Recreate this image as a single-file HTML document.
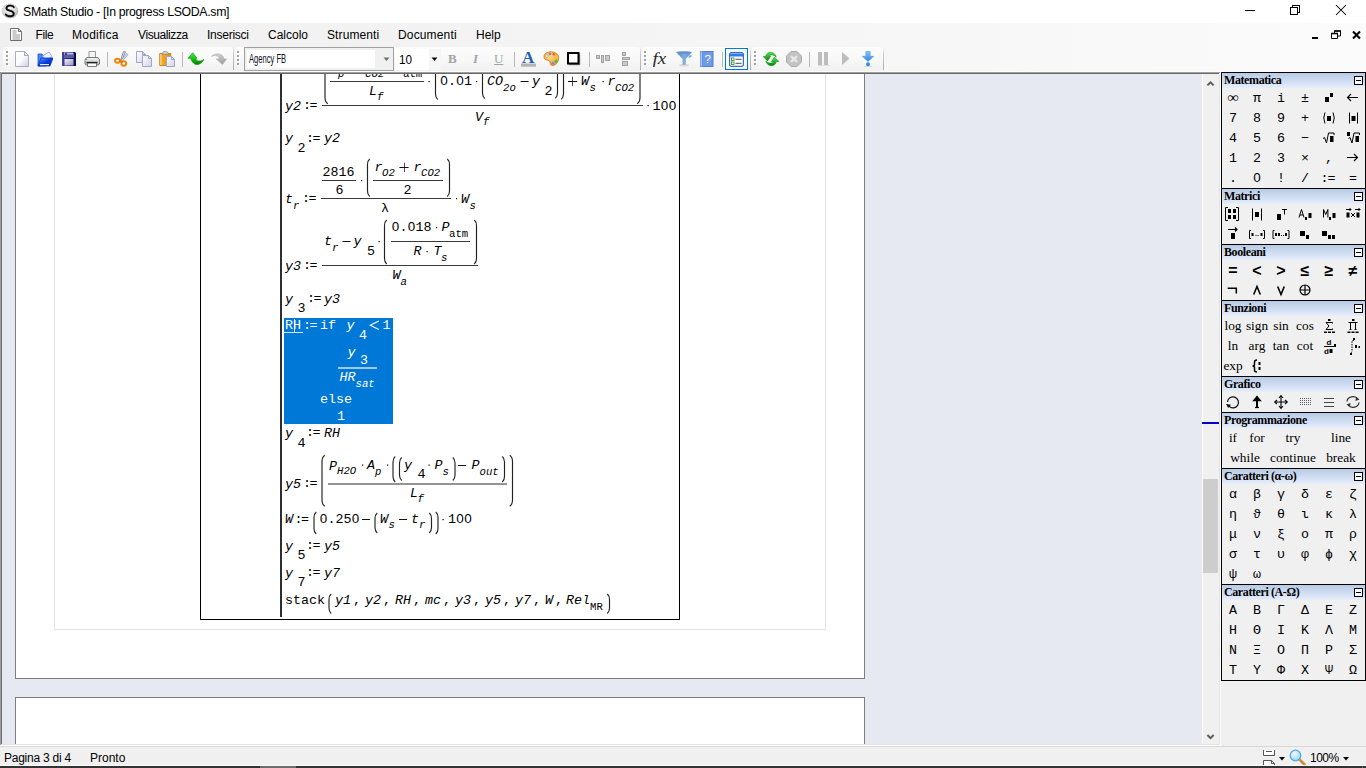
<!DOCTYPE html>
<html><head><meta charset="utf-8"><title>SMath Studio - [In progress LSODA.sm]</title>
<style>
*{box-sizing:border-box;margin:0;padding:0}
html,body{width:1366px;height:768px;overflow:hidden;background:#fff}
body{position:relative;font-family:"Liberation Sans",sans-serif;font-size:12px;color:#000}
.abs,.abs *{position:absolute}
div,span,svg{position:absolute}
.t{white-space:pre;line-height:normal}
#title{left:0;top:0;width:1366px;height:23px;background:#fff}
#bars{left:0;top:23px;width:1366px;height:49px;background:linear-gradient(90deg,#f0f0f0 0%,#f3f3f3 35%,#fbfbfb 100%)}
.mi{top:27px;font-size:12px;white-space:pre;height:16px;line-height:16px}
.ts{top:47px;height:24px;border-radius:3px 3px 2px 2px;background:linear-gradient(#fcfcfc,#f8f8f8 50%,#f1f1f1)}
.grip i{left:0;width:2px;height:2px;background:#a0a0a0;display:block;position:absolute;box-shadow:1px 1px 0 rgba(255,255,255,0.9)}
.sep{top:52px;width:1px;height:15px;background:#b9b9b9}
#doc{left:0;top:72px;width:1221px;height:674px;background:#e6e9f1}
.m{font-family:"Liberation Mono",monospace;font-size:13.333px;white-space:pre;line-height:16px;height:16px;color:#000}
.m.i{font-style:italic}
.m.s{font-size:10.667px;line-height:12px;height:12px}
.w{color:#fff}
.ph{left:1222px;width:143px;height:15px}
.phd{left:1222px;width:143px;height:15px;background:linear-gradient(#b7cbe4,#cfdcf0 50%,#e6eefc)}
.pt{font-family:"Liberation Serif",serif;font-weight:bold;font-size:12px;line-height:15px;height:15px;white-space:pre;left:1224px;letter-spacing:-0.4px}
.pc{font-family:"Liberation Mono",monospace;font-size:13.333px;line-height:22px;height:22px;width:24px;text-align:center;white-space:pre}
.ps{font-family:"Liberation Serif",serif;font-size:13.333px;line-height:20px;height:20px;text-align:center;white-space:pre}
#status{left:0;top:746px;width:1366px;height:20px;background:#f0f0f0}
</style></head>
<body>
<div id="title"><svg style="left:1px;top:2px" width="18" height="18" viewBox="0 0 18 18"><defs><radialGradient id="sg" cx="40%" cy="35%" r="70%"><stop offset="0" stop-color="#f4f4f4"/><stop offset="0.7" stop-color="#d4d4d4"/><stop offset="1" stop-color="#a8a8a8"/></radialGradient></defs><ellipse cx="9" cy="9" rx="7.8" ry="7" fill="url(#sg)" stroke="#9a9a9a" stroke-width="0.7" stroke-dasharray="1.5 1"/><path d="M12.8 5.2 C11.8 3.2 5.6 2.8 5.4 6.2 C5.2 9.4 13.0 8.0 12.8 11.8 C12.6 15.2 6.0 14.8 4.8 12.4" fill="none" stroke="#0c0c0c" stroke-width="1.9" stroke-linecap="round"/></svg><span class="t" style="left:23px;top:5px;font-size:12.3px;line-height:15px;letter-spacing:-0.32px">SMath Studio - [In progress LSODA.sm]</span><svg style="left:1240px;top:0" width="126" height="23" viewBox="0 0 126 23"><path d="M5 10.5h10" stroke="#000" stroke-width="1" fill="none" shape-rendering="crispEdges"/><path d="M50.5 7.5h7v7h-7z M52.5 7.5v-2h7v7h-2" stroke="#000" stroke-width="1" fill="none" shape-rendering="crispEdges"/><path d="M96 5l10 10M106 5L96 15" stroke="#000" stroke-width="1.05" fill="none"/></svg></div>
<div id="bars"></div><div style="left:0;top:71px;width:1221px;height:1px;background:#fdfdfd"></div>
<svg style="left:9px;top:27px" width="15" height="15" viewBox="0 0 15 15"><path d="M1.5 1.5h8l3 3v9h-11z" fill="#fff" stroke="#6e6e6e" stroke-width="1"/><path d="M9.5 1.5v3h3" fill="none" stroke="#6e6e6e" stroke-width="1"/><path d="M3.5 4h4M3.5 6h4M3.5 8h7.5M3.5 10h7.5M3.5 12h7.5" stroke="#8a8a8a" stroke-width="0.9"/></svg><span class="mi" style="left:35.5px;letter-spacing:-0.35px">File</span><span class="mi" style="left:72px;letter-spacing:0.25px">Modifica</span><span class="mi" style="left:138px;letter-spacing:-0.4px">Visualizza</span><span class="mi" style="left:207px;letter-spacing:-0.25px">Inserisci</span><span class="mi" style="left:268px;letter-spacing:0px">Calcolo</span><span class="mi" style="left:327px;letter-spacing:0.1px">Strumenti</span><span class="mi" style="left:398px;letter-spacing:0.15px">Documenti</span><span class="mi" style="left:476px;letter-spacing:0px">Help</span><svg style="left:1308px;top:27px" width="56" height="15" viewBox="0 0 56 15"><path d="M4 11h6" stroke="#000" stroke-width="2" shape-rendering="crispEdges"/><path d="M23.5 6.5h6v5h-6z M26.5 6v-2h6v5h-2.5" fill="none" stroke="#000" stroke-width="1"/><path d="M23 6.5h7M26 4h7" stroke="#000" stroke-width="1.6"/><path d="M45 4.5l7 7M52 4.5l-7 7" stroke="#000" stroke-width="2.1"/></svg>
<div class="ts" style="left:3px;width:230px"></div><div class="ts" style="left:235px;width:405px"></div><div class="ts" style="left:642px;width:108px"></div><div class="ts" style="left:752px;width:131px"></div><div style="left:233px;top:47px;width:1px;height:23px;background:linear-gradient(rgba(176,176,176,0),rgba(176,176,176,0.6) 30%,#adadad)"></div><div style="left:640px;top:47px;width:1px;height:23px;background:linear-gradient(rgba(176,176,176,0),rgba(176,176,176,0.6) 30%,#adadad)"></div><div style="left:750px;top:47px;width:1px;height:23px;background:linear-gradient(rgba(176,176,176,0),rgba(176,176,176,0.6) 30%,#adadad)"></div><div style="left:883px;top:47px;width:1px;height:23px;background:linear-gradient(rgba(176,176,176,0),rgba(176,176,176,0.6) 30%,#adadad)"></div><div class="grip" style="left:6px;top:51px;width:2px;height:16px"><i style="top:0px"></i><i style="top:4px"></i><i style="top:8px"></i><i style="top:12px"></i></div><svg style="left:14px;top:51px" width="16" height="16" viewBox="0 0 16 16"><defs><linearGradient id="gn" x1="0" y1="0" x2="1" y2="1"><stop offset="0" stop-color="#ffffff"/><stop offset="0.5" stop-color="#fbfbfe"/><stop offset="1" stop-color="#c9cde2"/></linearGradient></defs><path d="M1.5 0.5h9l4 4v11h-13z" fill="url(#gn)" stroke="#a9adc2"/><path d="M10.5 0.5v4h4z" fill="#e9ebf5" stroke="#a3a7bd" stroke-linejoin="round"/></svg><svg style="left:37px;top:51px" width="16" height="16" viewBox="0 0 16 16"><defs><linearGradient id="go" x1="0" y1="0" x2="1" y2="1"><stop offset="0" stop-color="#5aa2ff"/><stop offset="0.5" stop-color="#0a3fe0"/><stop offset="1" stop-color="#0026a8"/></linearGradient></defs><path d="M1 3h4l1 1.5h3V15H1z" fill="#3f8cf0" stroke="#1f4fd0" stroke-width="0.8"/><path d="M5.5 5l6.5-4 3 4.5-6 4z" fill="#eef0fb" stroke="#8c92d8" stroke-width="0.8"/><path d="M1 15l3-8h12l-3 8z" fill="url(#go)" stroke="#0a2fc0" stroke-width="0.8"/><path d="M3 13.6h9" stroke="#e8eaf6" stroke-width="1.2"/></svg><svg style="left:60px;top:51px" width="16" height="16" viewBox="0 0 16 16"><defs><linearGradient id="gs" x1="0" y1="0" x2="1" y2="0"><stop offset="0" stop-color="#4a4a9a"/><stop offset="0.3" stop-color="#26267c"/><stop offset="1" stop-color="#08084a"/></linearGradient><linearGradient id="gs2" x1="0" y1="0" x2="1" y2="1"><stop offset="0" stop-color="#f0f0fa"/><stop offset="1" stop-color="#9494c4"/></linearGradient></defs><path d="M2 1h13l1 1v13H2z" fill="url(#gs)"/><path d="M4 1.500h9.500v5H4z" fill="#b9b9e0"/><path d="M4 3.500h9.500v3H4z" fill="#5a5aa6"/><path d="M4.500 8h9v6.500h-9z" fill="url(#gs2)"/><circle cx="6" cy="3" r="1.100" fill="#24247c"/></svg><svg style="left:84px;top:51px" width="16" height="16" viewBox="0 0 16 16"><defs><linearGradient id="gp" x1="0" y1="0" x2="0" y2="1"><stop offset="0" stop-color="#f6f6f6"/><stop offset="1" stop-color="#b8b8b8"/></linearGradient></defs><path d="M5 0.5h6.5v6H5z" fill="#f4f4f4" stroke="#8c8c8c" stroke-width="0.9"/><path d="M2.5 6.5h11.500l1.500 2.500v4l-1.500 1h-11.500l-1.500-1v-4z" fill="url(#gp)" stroke="#6e6e6e" stroke-width="0.9"/><path d="M3.5 12h9v3.500h-9z" fill="#fafafa" stroke="#707070" stroke-width="0.9"/><path d="M2.500 11.500h11" stroke="#222" stroke-width="1.300"/><circle cx="2.700" cy="8.300" r="0.600" fill="#2ea02e"/></svg><div class="sep" style="left:107px"></div><svg style="left:114px;top:51px" width="16" height="16" viewBox="0 0 16 16"><path d="M9.500 0.500l2 0.300-4 9.500-1-0.800z" fill="#d4d7ea" stroke="#7c80a8" stroke-width="0.800"/><path d="M12.500 2.500l1.500 1-6 7-1-1z" fill="#dcdfee" stroke="#8a8fb8" stroke-width="0.700"/><ellipse cx="3.500" cy="9.800" rx="2.500" ry="2" fill="none" stroke="#e8890c" stroke-width="2"/><ellipse cx="9.800" cy="12.500" rx="2.300" ry="2.300" fill="none" stroke="#e8890c" stroke-width="2"/><path d="M5.500 9.500l3 1.800" stroke="#d87a06" stroke-width="2"/></svg><svg style="left:136px;top:51px" width="16" height="16" viewBox="0 0 16 16"><defs><linearGradient id="gc" x1="0" y1="0" x2="1" y2="1"><stop offset="0" stop-color="#ffffff"/><stop offset="1" stop-color="#cfd2e8"/></linearGradient></defs><path d="M0.500 0.500h6l3 3v8h-9z" fill="url(#gc)" stroke="#a2a6c4"/><path d="M6.500 0.500v3h3z" fill="#d5d8ea" stroke="#a2a6c4" stroke-linejoin="round"/><path d="M6.500 4.500h6l3 3v8h-9z" fill="url(#gc)" stroke="#a2a6c4"/><path d="M12.500 4.500v3h3z" fill="#d5d8ea" stroke="#a2a6c4" stroke-linejoin="round"/></svg><svg style="left:159px;top:51px" width="16" height="16" viewBox="0 0 16 16"><defs><linearGradient id="gpa" x1="0" y1="0" x2="1" y2="0"><stop offset="0" stop-color="#fff2d6"/><stop offset="0.25" stop-color="#f4a820"/><stop offset="1" stop-color="#e08a08"/></linearGradient><linearGradient id="gc2" x1="0" y1="0" x2="1" y2="1"><stop offset="0" stop-color="#ffffff"/><stop offset="1" stop-color="#cfd2e8"/></linearGradient></defs><path d="M0.700 2.500h11v12h-11z" fill="url(#gpa)" stroke="#c47a10" stroke-width="0.900"/><path d="M3 3.200c0-3.600 6.500-3.600 6.500 0z" fill="#dcdcdc" stroke="#8a8a8a" stroke-width="0.900"/><path d="M7.500 5.500h5l3 3v7h-8z" fill="url(#gc2)" stroke="#a2a6c4"/><path d="M12.500 5.500v3h3z" fill="#d5d8ea" stroke="#a2a6c4" stroke-linejoin="round"/></svg><div class="sep" style="left:182px"></div><svg style="left:188px;top:51px" width="16" height="16" viewBox="0 0 16 16"><defs><linearGradient id="gu" x1="0" y1="0" x2="0" y2="1"><stop offset="0" stop-color="#48f048"/><stop offset="0.5" stop-color="#14c414"/><stop offset="1" stop-color="#007800"/></linearGradient></defs><path d="M4.700 1.800L0.100 7.300H3C3.300 11 7 14.800 11 13.200C13.500 12.200 15 10.500 16 8.200C13 10.800 8.300 10.800 7.700 7.200H9z" fill="url(#gu)" stroke="#0a8a0a" stroke-width="0.600" stroke-linejoin="round"/></svg><svg style="left:211px;top:52px" width="16" height="16" viewBox="0 0 16 16"><defs><linearGradient id="gr" x1="0" y1="0" x2="0" y2="1"><stop offset="0" stop-color="#d0d0d0"/><stop offset="1" stop-color="#9c9c9c"/></linearGradient></defs><path d="M11.500 12.500l4.200-5.500h-2.700c-0.500-5-7.500-7.500-12.700-2.500 4.500-2 8-0.500 7.700 2.500h-2.800z" fill="url(#gr)" stroke="#a8a8a8" stroke-width="0.500" stroke-linejoin="round"/></svg><div class="grip" style="left:237px;top:51px;width:2px;height:16px"><i style="top:0px"></i><i style="top:4px"></i><i style="top:8px"></i><i style="top:12px"></i></div><div style="left:244px;top:47px;width:150px;height:24px;border:1px solid #a0a0a0;background:#f0f0f0"><div style="left:2px;top:2px;width:128px;height:18px;background:#fff"></div></div><span class="t" style="left:249px;top:51px;font-size:13px;line-height:15px;transform-origin:0 50%;transform:scaleX(0.585);color:#101020">Agency FB</span><svg style="left:383px;top:57px" width="8" height="5" viewBox="0 0 8 5"><path d="M0.500 0.500h6L3.500 4z" fill="#707070"/></svg><div style="left:395px;top:49px;width:34px;height:21px;background:#fff"></div><div style="left:429px;top:49px;width:12px;height:21px;background:#f6f6f6"></div><span class="t" style="left:399px;top:52px;font-size:13.3px;line-height:15px;transform-origin:0 50%;transform:scaleX(0.88)">10</span><svg style="left:431px;top:57px" width="8" height="5" viewBox="0 0 8 5"><path d="M0.600 0.500h5.800L3.500 3.900z" fill="#000"/></svg><span class="t" style="left:448px;top:51px;font-family:'Liberation Serif',serif;font-weight:bold;font-size:13px;line-height:15px;color:#a4a4a4">B</span><span class="t" style="left:473px;top:51px;font-family:'Liberation Serif',serif;font-weight:bold;font-style:italic;font-size:13px;line-height:15px;color:#a4a4a4">I</span><span class="t" style="left:494px;top:51px;font-family:'Liberation Serif',serif;font-size:13px;line-height:15px;color:#a4a4a4;text-decoration:underline">U</span><div class="sep" style="left:514px"></div><svg style="left:521px;top:51px" width="16" height="16" viewBox="0 0 16 16"><text x="7.200" y="12" font-family="Liberation Serif" font-weight="bold" font-size="17" text-anchor="middle" fill="#1f5fb4">A</text><rect x="0" y="12.500" width="15" height="3.200" fill="#b4b4b4"/></svg><svg style="left:543px;top:51px" width="16" height="16" viewBox="0 0 16 16"><defs><radialGradient id="gpl" cx="40%" cy="35%" r="70%"><stop offset="0" stop-color="#ffd98a"/><stop offset="1" stop-color="#ee9a28"/></radialGradient></defs><path d="M1 6C1 1.500 6 0.300 10 1c4 0.700 6.500 3.500 5.500 7.500-1 4-4 6.800-7 5.800-2.500-0.800-0.500-3-2-4.300C4.500 8.500 1 9.500 1 6z" fill="url(#gpl)" stroke="#c9761a" stroke-width="0.800"/><circle cx="3.800" cy="5" r="1.300" fill="#fff" stroke="#b0804a" stroke-width="0.500"/><circle cx="7" cy="3" r="1.200" fill="#3aa0f0"/><circle cx="10.800" cy="3.300" r="1.200" fill="#f05a28"/><circle cx="13.600" cy="6.500" r="1.200" fill="#f5d020"/><circle cx="13" cy="10.200" r="1.500" fill="#30c840"/><circle cx="9.800" cy="12.200" r="1.300" fill="#a070e8"/></svg><svg style="left:566px;top:51px" width="16" height="16" viewBox="0 0 16 16"><rect x="2.700" y="2.700" width="11.500" height="11.500" fill="#8c8c8c"/><rect x="2" y="2" width="10.500" height="10.500" fill="#fff" stroke="#000" stroke-width="2"/></svg><div class="sep" style="left:589px"></div><svg style="left:596px;top:51px" width="16" height="16" viewBox="0 0 16 16"><g fill="#c9c9c9" stroke="#a2a2a2" stroke-width="1"><rect x="0.500" y="4.500" width="3" height="3"/><rect x="5.500" y="4.500" width="2" height="7"/><rect x="9.500" y="4.500" width="4" height="5"/></g></svg><svg style="left:619px;top:51px" width="16" height="16" viewBox="0 0 16 16"><g fill="#c9c9c9" stroke="#a2a2a2" stroke-width="1"><rect x="3.500" y="1.500" width="3" height="3"/><rect x="3.500" y="6.500" width="7" height="2"/><rect x="3.500" y="10.500" width="5" height="4"/></g></svg><div class="grip" style="left:644px;top:51px;width:2px;height:16px"><i style="top:0px"></i><i style="top:4px"></i><i style="top:8px"></i><i style="top:12px"></i></div><svg style="left:653px;top:51px" width="16" height="16" viewBox="0 0 16 16"><text x="-0.500" y="12.500" font-family="Liberation Serif" font-style="italic" font-size="17" fill="#2a2a2a" transform="scale(1.12 1)" style="font-family:'Liberation Serif',serif">fx</text></svg><svg style="left:676px;top:51px" width="16" height="16" viewBox="0 0 16 16"><defs><linearGradient id="gf" x1="0" y1="0" x2="1" y2="0"><stop offset="0" stop-color="#4a82c8"/><stop offset="0.5" stop-color="#86aede"/><stop offset="1" stop-color="#5a8ccc"/></linearGradient></defs><ellipse cx="8" cy="14.200" rx="5" ry="1.200" fill="#d8d8d8"/><path d="M0.300 1.200h15.400L9.800 8v5.500l-3.200 0.500V8z" fill="url(#gf)"/><ellipse cx="8" cy="1.600" rx="7.600" ry="1.400" fill="#5f92d2"/><path d="M13 4.500l2.500-0.500v2l-3 1z" fill="#7aa6da"/></svg><svg style="left:700px;top:51px" width="16" height="16" viewBox="0 0 16 16"><rect x="0.500" y="0.500" width="12.500" height="15" fill="#6f9ae6" stroke="#4f7fd8"/><rect x="0.500" y="0.500" width="2" height="15" fill="#a9c4f2"/><path d="M2.500 0.500v15" stroke="#4f7fd8" stroke-width="0.700"/><text x="7.800" y="12" font-family="Liberation Sans" font-size="11.500" fill="#fff" text-anchor="middle">?</text></svg><div class="sep" style="left:722px"></div><div style="left:725px;top:48px;width:23px;height:22px;border:1px solid #0078d7;background:#f3f9ff"></div><svg style="left:729px;top:52px" width="15" height="15" viewBox="0 0 15 15"><rect x="0.700" y="0.700" width="13.600" height="13.600" rx="1.200" fill="#fff" stroke="#1a46a4" stroke-width="1"/><path d="M1 1.200h13v3.300H1z" fill="#2f7cf0"/><path d="M1.500 1.500h12" stroke="#7db4ff" stroke-width="1"/><rect x="2.500" y="6" width="2.500" height="2.500" fill="#fff" stroke="#3a9a3a" stroke-width="0.900"/><rect x="2.500" y="10" width="2.500" height="2.500" fill="#fff" stroke="#3a9a3a" stroke-width="0.900"/><path d="M6.500 7.300h6M6.500 11.300h6" stroke="#3a3a3a" stroke-width="0.900"/></svg><div class="grip" style="left:754px;top:51px;width:2px;height:16px"><i style="top:0px"></i><i style="top:4px"></i><i style="top:8px"></i><i style="top:12px"></i></div><svg style="left:763px;top:51px" width="16" height="16" viewBox="0 0 16 16"><defs><linearGradient id="grf" x1="0" y1="0" x2="0" y2="1"><stop offset="0" stop-color="#52e652"/><stop offset="1" stop-color="#058205"/></linearGradient></defs><path d="M0.200 5.500l4.300 4.500 3.300-4.800-2.400 0.400c1.200-2 4.600-2.600 7.800 0.400C12.200 1 4.500-1.200 2.600 5.300z" fill="url(#grf)" stroke="#0a8a0a" stroke-width="0.500"/><path d="M15.800 10.500l-4.300-4.500-3.300 4.800 2.400-0.400c-1.200 2-4.600 2.600-7.800-0.400C3.800 15 11.500 17.200 13.400 10.700z" fill="url(#grf)" stroke="#0a8a0a" stroke-width="0.500"/></svg><svg style="left:786px;top:51px" width="16" height="16" viewBox="0 0 16 16"><path d="M5 0.500h6l4.500 4.500v6l-4.500 4.500h-6l-4.500-4.500v-6z" fill="#c2c2c2" stroke="#adadad"/><path d="M5 5l6 6M11 5l-6 6" stroke="#e9e9e9" stroke-width="2.400"/></svg><div class="sep" style="left:809px"></div><svg style="left:818px;top:52px" width="12" height="14" viewBox="0 0 12 14"><rect x="0" y="0" width="4" height="13" fill="#bdbdbd"/><rect x="6" y="0" width="4" height="13" fill="#bdbdbd"/><path d="M-2 13.500h14" stroke="#dcdcdc" stroke-width="1"/></svg><svg style="left:842px;top:52px" width="8" height="13" viewBox="0 0 8 13"><path d="M0 0l7.500 6.500L0 13z" fill="#bdbdbd"/></svg><svg style="left:862px;top:51px" width="12" height="16" viewBox="0 0 12 16"><defs><linearGradient id="gst" x1="0" y1="0" x2="0" y2="1"><stop offset="0" stop-color="#8cc4f8"/><stop offset="1" stop-color="#2a86e0"/></linearGradient></defs><ellipse cx="6" cy="15.400" rx="4" ry="0.800" fill="#dadada"/><path d="M3.800 0.300h4.400v5h3.600L6 10.500 0.200 5.300h3.600z" fill="url(#gst)" stroke="#4a98e6" stroke-width="0.500"/><circle cx="6" cy="13.200" r="2" fill="#2f8ee8"/></svg>
<div id="doc"><div style="left:0;top:0;width:1221px;height:1px;background:#a0a0a0"></div><div style="left:0;top:0;width:1px;height:674px;background:#a0a0a0"></div><div style="left:1px;top:1px;width:1219px;height:1px;background:#696969"></div><div style="left:1px;top:1px;width:1px;height:672px;background:#696969"></div><div style="left:1219px;top:1px;width:1px;height:672px;background:#e3e3e3"></div><div style="left:1220px;top:0;width:1px;height:674px;background:#fff"></div><div style="left:1px;top:672px;width:1219px;height:1px;background:#e3e3e3"></div><div style="left:0;top:673px;width:1221px;height:1px;background:#fff"></div><div style="left:15px;top:2px;width:850px;height:605px;background:#fff;border:1px solid #7f7f7f;border-top:none"></div><div style="left:54px;top:2px;width:772px;height:556px;border:1px solid #e3e3e3;border-top:none"></div><div style="left:15px;top:625px;width:850px;height:47px;background:#fff;border:1px solid #7f7f7f;border-bottom:none"></div><div style="left:1202px;top:2px;width:17px;height:670px;background:#f0f0f0;border-left:1px solid #fff"></div><div style="left:1203px;top:407px;width:15px;height:94px;background:#cdcdcd"></div><div style="left:1202px;top:350px;width:17px;height:2px;background:#0000d0"></div><svg style="left:1202px;top:2px" width="17" height="670" viewBox="0 0 17 670"><path d="M5.400 11.400l3.100-3.100L11.600 11.400" fill="none" stroke="#5c5c5c" stroke-width="2"/><path d="M5.400 661l3.100 3.100L11.600 661" fill="none" stroke="#5c5c5c" stroke-width="2"/></svg></div>
<div id="math" style="left:0;top:74px;width:700px;height:560px;overflow:hidden"><div style="left:0;top:-74px;width:700px;height:640px"><div style="left:200px;top:74px;width:480px;height:546px;border:1px solid #000;border-top:none"></div><div style="left:280px;top:74px;width:2px;height:543px;background:#2e2e2e"></div><div style="left:284px;top:318px;width:109px;height:106px;background:#0078d7"></div><svg style="left:0;top:74px" width="700" height="560" viewBox="0 74 700 560"><path d="M322 105.5H643" stroke="#3a3a3a" stroke-width="1"/><path d="M327.8 56Q325 57.8 325 62.22V97.58Q325 102 327.8 103.8" fill="none" stroke="#222" stroke-width="1.15"/><path d="M637.2 56Q640 57.8 640 62.22V97.58Q640 102 637.2 103.8" fill="none" stroke="#222" stroke-width="1.15"/><rect x="349.5" y="66.5" width="1.2" height="1.2" fill="#000"/><rect x="389.5" y="66.5" width="1.2" height="1.2" fill="#000"/><path d="M330 81.5H424" stroke="#3a3a3a" stroke-width="1"/><rect x="428.5" y="81" width="1.2" height="1.2" fill="#000"/><path d="M437.7 62Q435.5 63.8 435.5 67.5V94Q435.5 97.7 437.7 99.5" fill="none" stroke="#222" stroke-width="1.15"/><rect x="476" y="81" width="1.2" height="1.2" fill="#000"/><path d="M484.7 64Q482.5 65.8 482.5 69.5V93Q482.5 96.7 484.7 98.5" fill="none" stroke="#222" stroke-width="1.15"/><path d="M520.6 81.5H528.6" stroke="#111" stroke-width="1"/><path d="M555.3 64Q557.5 65.8 557.5 69.5V92.7Q557.5 96.4 555.3 98.2" fill="none" stroke="#222" stroke-width="1.15"/><path d="M561.3 62Q563.5 63.8 563.5 67.5V93.7Q563.5 97.4 561.3 99.2" fill="none" stroke="#222" stroke-width="1.15"/><path d="M568 81.5H577.2" stroke="#111" stroke-width="1"/><path d="M572.5 76.7V86.1" stroke="#111" stroke-width="1" opacity="0.75"/><rect x="602.5" y="81" width="1.2" height="1.2" fill="#000"/><rect x="647.5" y="105" width="1.2" height="1.2" fill="#000"/><path d="M321 198.5H451" stroke="#3a3a3a" stroke-width="1"/><path d="M322 180.5H356" stroke="#3a3a3a" stroke-width="1"/><rect x="361" y="180" width="1.2" height="1.2" fill="#000"/><path d="M369.7 159Q367.5 160.8 367.5 164.5V191Q367.5 194.7 369.7 196.5" fill="none" stroke="#222" stroke-width="1.15"/><path d="M399.4 167.5H408.6" stroke="#111" stroke-width="1"/><path d="M404.5 162.7V172.1" stroke="#111" stroke-width="1" opacity="0.75"/><path d="M373 180.5H443" stroke="#3a3a3a" stroke-width="1"/><path d="M447.3 159Q449.5 160.8 449.5 164.5V191Q449.5 194.7 447.3 196.5" fill="none" stroke="#222" stroke-width="1.15"/><rect x="456" y="198" width="1.2" height="1.2" fill="#000"/><path d="M322 265.5H478" stroke="#3a3a3a" stroke-width="1"/><path d="M342.5 241.5H350.5" stroke="#111" stroke-width="1"/><rect x="378.5" y="241" width="1.2" height="1.2" fill="#000"/><path d="M386.7 220Q384.5 221.8 384.5 225.5V258.5Q384.5 262.2 386.7 264" fill="none" stroke="#222" stroke-width="1.15"/><rect x="436" y="227" width="1.2" height="1.2" fill="#000"/><path d="M391 241.5H470" stroke="#3a3a3a" stroke-width="1"/><rect x="426.5" y="251" width="1.2" height="1.2" fill="#000"/><path d="M474.3 220Q476.5 221.8 476.5 225.5V258.5Q476.5 262.2 474.3 264" fill="none" stroke="#222" stroke-width="1.15"/><path d="M284 332.5H303" stroke="#cfe4f7" stroke-width="1"/><path d="M294.5 319V333" stroke="#cfe4f7" stroke-width="1"/><path d="M378.8 321L370.2 325.2L378.8 329.4" fill="none" stroke="#fff" stroke-width="1.1"/><path d="M338 368H377" stroke="#9fc9ef" stroke-width="2"/><path d="M324.8 455.3Q322 457.1 322 461.52V500.08Q322 504.5 324.8 506.3" fill="none" stroke="#222" stroke-width="1.15"/><path d="M509.7 455.3Q512.5 457.1 512.5 461.52V500.08Q512.5 504.5 509.7 506.3" fill="none" stroke="#222" stroke-width="1.15"/><rect x="362" y="464.5" width="1.2" height="1.2" fill="#000"/><rect x="387" y="464.5" width="1.2" height="1.2" fill="#000"/><path d="M395.2 456.5Q393 458.3 393 462V476.5Q393 480.2 395.2 482" fill="none" stroke="#222" stroke-width="1.15"/><path d="M401.7 457.5Q399.5 459.3 399.5 463V475Q399.5 478.7 401.7 480.5" fill="none" stroke="#222" stroke-width="1.15"/><rect x="428.5" y="464.5" width="1.2" height="1.2" fill="#000"/><path d="M452.8 457.5Q455 459.3 455 463V475Q455 478.7 452.8 480.5" fill="none" stroke="#222" stroke-width="1.15"/><path d="M458 465.5H466" stroke="#111" stroke-width="1"/><path d="M502.3 456.5Q504.5 458.3 504.5 462V476.5Q504.5 480.2 502.3 482" fill="none" stroke="#222" stroke-width="1.15"/><path d="M328 484H507" stroke="#2a2a2a" stroke-width="1"/><path d="M316.2 512Q314 513.8 314 517.5V528.5Q314 532.2 316.2 534" fill="none" stroke="#222" stroke-width="1.15"/><path d="M362 519.5H370" stroke="#111" stroke-width="1"/><path d="M377.2 513Q375 514.8 375 518.5V527.5Q375 531.2 377.2 533" fill="none" stroke="#222" stroke-width="1.15"/><path d="M399 519.5H407" stroke="#111" stroke-width="1"/><path d="M429.3 513Q431.5 514.8 431.5 518.5V527.5Q431.5 531.2 429.3 533" fill="none" stroke="#222" stroke-width="1.15"/><path d="M435.8 512Q438 513.8 438 517.5V528.5Q438 532.2 435.8 534" fill="none" stroke="#222" stroke-width="1.15"/><rect x="442.5" y="519" width="1.2" height="1.2" fill="#000"/><path d="M331.2 594Q329 595.8 329 599.5V608Q329 611.7 331.2 613.5" fill="none" stroke="#222" stroke-width="1.15"/><path d="M607.3 594Q609.5 595.8 609.5 599.5V608Q609.5 611.7 607.3 613.5" fill="none" stroke="#222" stroke-width="1.15"/></svg><span class="m i" style="left:285px;top:99px">y2</span><span class="m" style="left:303px;top:97.5px;letter-spacing:-1.5px">:=</span><span class="m i" style="left:330px;top:60px">A</span><span class="m i s" style="left:338px;top:68px">p</span><span class="m i" style="left:357px;top:60px">P</span><span class="m i s" style="left:365px;top:68px">CO2</span><span class="m i" style="left:395px;top:60px">P</span><span class="m s" style="left:403px;top:68px">atm</span><span class="m i" style="left:369px;top:84px">L</span><span class="m i s" style="left:377px;top:90.5px">f</span><span class="m" style="left:440px;top:74px">0.01</span><span class="m i" style="left:487px;top:74px">CO</span><span class="m i s" style="left:503px;top:81.5px">2o</span><span class="m i" style="left:532px;top:74px">y</span><span class="m" style="left:544.5px;top:83.5px">2</span><span class="m i" style="left:581px;top:74px">W</span><span class="m i s" style="left:589.5px;top:81.5px">s</span><span class="m i" style="left:607.5px;top:74px">r</span><span class="m i s" style="left:615px;top:81.5px">CO2</span><span class="m" style="left:652.5px;top:99px">100</span><span class="m i" style="left:475px;top:110px">V</span><span class="m i s" style="left:483px;top:116px">f</span><span class="m i" style="left:285px;top:131px">y</span><span class="m" style="left:297.5px;top:141px">2</span><span class="m" style="left:306px;top:130.5px;letter-spacing:-1.5px">:=</span><span class="m i" style="left:324px;top:131px">y2</span><span class="m i" style="left:285px;top:192px">t</span><span class="m i s" style="left:293px;top:200px">r</span><span class="m" style="left:302px;top:190.5px;letter-spacing:-1.5px">:=</span><span class="m" style="left:322.5px;top:165px">2816</span><span class="m" style="left:335.5px;top:183px">6</span><span class="m i" style="left:374.5px;top:159.5px">r</span><span class="m i s" style="left:382px;top:167px">O2</span><span class="m i" style="left:413.5px;top:159.5px">r</span><span class="m i s" style="left:421px;top:167px">CO2</span><span class="m" style="left:403.5px;top:183px">2</span><span class="m" style="left:381px;top:201px">λ</span><span class="m i" style="left:461px;top:192px">W</span><span class="m i s" style="left:469.5px;top:200px">s</span><span class="m i" style="left:285px;top:259px">y3</span><span class="m" style="left:303px;top:257.5px;letter-spacing:-1.5px">:=</span><span class="m i" style="left:324px;top:234px">t</span><span class="m i s" style="left:332px;top:241.5px">r</span><span class="m i" style="left:353.5px;top:234px">y</span><span class="m" style="left:367px;top:244px">5</span><span class="m" style="left:391.5px;top:220px">0.018</span><span class="m i" style="left:441.5px;top:220px">P</span><span class="m s" style="left:449px;top:227.5px">atm</span><span class="m i" style="left:413.5px;top:244px">R</span><span class="m i" style="left:433.5px;top:244px">T</span><span class="m i s" style="left:441px;top:251.5px">s</span><span class="m i" style="left:392.5px;top:267.5px">W</span><span class="m i s" style="left:400.5px;top:275.5px">a</span><span class="m i" style="left:285px;top:291.5px">y</span><span class="m" style="left:297.5px;top:301px">3</span><span class="m" style="left:307px;top:291px;letter-spacing:-1.5px">:=</span><span class="m i" style="left:324px;top:291.5px">y3</span><span class="m" style="left:285px;top:318px;color:#fff">RH</span><span class="m" style="left:303px;top:317.5px;letter-spacing:-1.5px;color:#fff">:=</span><span class="m" style="left:320px;top:318px;color:#fff">if</span><span class="m i" style="left:346.5px;top:318px;color:#fff">y</span><span class="m" style="left:359px;top:328px;color:#fff">4</span><span class="m" style="left:382.5px;top:318px;color:#fff">1</span><span class="m i" style="left:347.5px;top:345px;color:#fff">y</span><span class="m" style="left:360px;top:353px;color:#fff">3</span><span class="m i" style="left:339.5px;top:370px;color:#fff">HR</span><span class="m i s" style="left:355.5px;top:378px;color:#fff">sat</span><span class="m" style="left:320px;top:392px;color:#fff">else</span><span class="m" style="left:337px;top:409px;color:#fff">1</span><span class="m i" style="left:285px;top:425.5px">y</span><span class="m" style="left:297.5px;top:436px">4</span><span class="m" style="left:306px;top:425px;letter-spacing:-1.5px">:=</span><span class="m i" style="left:324px;top:426px">RH</span><span class="m i" style="left:285px;top:477px">y5</span><span class="m" style="left:303px;top:476px;letter-spacing:-1.5px">:=</span><span class="m i" style="left:329px;top:459px">P</span><span class="m i s" style="left:337px;top:465px">H2O</span><span class="m i" style="left:367px;top:458px">A</span><span class="m i s" style="left:375px;top:465.5px">p</span><span class="m i" style="left:404px;top:458px">y</span><span class="m" style="left:417.5px;top:467px">4</span><span class="m i" style="left:434.5px;top:458px">P</span><span class="m i s" style="left:442.5px;top:465.5px">s</span><span class="m i" style="left:471.5px;top:458px">P</span><span class="m i s" style="left:479.5px;top:465.5px">out</span><span class="m i" style="left:410px;top:485.5px">L</span><span class="m i s" style="left:417.5px;top:492.5px">f</span><span class="m i" style="left:285px;top:512px">W</span><span class="m" style="left:294.5px;top:512px;letter-spacing:-1.5px">:=</span><span class="m" style="left:319.5px;top:512px">0.250</span><span class="m i" style="left:380px;top:512px">W</span><span class="m i s" style="left:388.5px;top:519px">s</span><span class="m i" style="left:411px;top:512px">t</span><span class="m i s" style="left:419px;top:519px">r</span><span class="m" style="left:448px;top:512px">100</span><span class="m i" style="left:285px;top:538.5px">y</span><span class="m" style="left:297.5px;top:548px">5</span><span class="m" style="left:306px;top:538px;letter-spacing:-1.5px">:=</span><span class="m i" style="left:324px;top:539px">y5</span><span class="m i" style="left:285px;top:565.5px">y</span><span class="m" style="left:297.5px;top:575px">7</span><span class="m" style="left:306px;top:565px;letter-spacing:-1.5px">:=</span><span class="m i" style="left:324px;top:566px">y7</span><span class="m" style="left:285px;top:593px">stack</span><span class="m i" style="left:335px;top:593px">y1</span><span class="m" style="left:353px;top:593px">,</span><span class="m i" style="left:365px;top:593px">y2</span><span class="m" style="left:383px;top:593px">,</span><span class="m i" style="left:395px;top:593px">RH</span><span class="m" style="left:413px;top:593px">,</span><span class="m i" style="left:425px;top:593px">mc</span><span class="m" style="left:443px;top:593px">,</span><span class="m i" style="left:455px;top:593px">y3</span><span class="m" style="left:473px;top:593px">,</span><span class="m i" style="left:485px;top:593px">y5</span><span class="m" style="left:503px;top:593px">,</span><span class="m i" style="left:515px;top:593px">y7</span><span class="m" style="left:533px;top:593px">,</span><span class="m i" style="left:545px;top:593px">W</span><span class="m" style="left:555px;top:593px">,</span><span class="m i" style="left:566px;top:593px">Rel</span><span class="m s" style="left:590px;top:601px">MR</span><div style="left:443.4px;top:79.3px;width:2.2px;height:2.4px;background:#fff"></div><div style="left:459.4px;top:79.3px;width:2.2px;height:2.4px;background:#fff"></div><div style="left:663.9px;top:104.3px;width:2.2px;height:2.4px;background:#fff"></div><div style="left:671.9px;top:104.3px;width:2.2px;height:2.4px;background:#fff"></div><div style="left:394.9px;top:225.3px;width:2.2px;height:2.4px;background:#fff"></div><div style="left:410.9px;top:225.3px;width:2.2px;height:2.4px;background:#fff"></div><div style="left:322.9px;top:517.3px;width:2.2px;height:2.4px;background:#fff"></div><div style="left:354.9px;top:517.3px;width:2.2px;height:2.4px;background:#fff"></div><div style="left:459.4px;top:517.3px;width:2.2px;height:2.4px;background:#fff"></div><div style="left:467.4px;top:517.3px;width:2.2px;height:2.4px;background:#fff"></div></div></div>
<div style="left:1221px;top:72px;width:145px;height:674px;background:#f0f0f0"></div><div style="left:1221px;top:72px;width:145px;height:117px;border:1px solid #000;background:#f0f0f0"></div><div class="phd" style="top:73px"></div><span class="pt" style="top:73px">Matematica</span><svg style="left:1354px;top:76px" width="9" height="9" viewBox="0 0 9 9"><rect x="0.500" y="0.500" width="8" height="8" fill="#fff" stroke="#000"/><path d="M2 4.500h5" stroke="#000"/></svg><span class="pc" style="left:1221px;top:88px;width:24px;font-family:'Liberation Serif',serif;font-size:14px;line-height:20px;transform:scaleX(1.15);">∞</span><span class="pc" style="left:1245px;top:88px;width:24px;">π</span><span class="pc" style="left:1269px;top:88px;width:24px;">i</span><span class="pc" style="left:1293px;top:88px;width:24px;">±</span><svg style="left:1317px;top:88px" width="24" height="20" viewBox="0 0 24 20"><rect x="8" y="9" width="4" height="5"/><rect x="13" y="5" width="3" height="4"/></svg><svg style="left:1341px;top:88px" width="24" height="20" viewBox="0 0 24 20"><path d="M6.500 9.500h10.500M10 6l-3.500 3.500 3.500 3.500" fill="none" stroke="#000" stroke-width="1.100"/></svg><span class="pc" style="left:1221px;top:108px;width:24px;">7</span><span class="pc" style="left:1245px;top:108px;width:24px;">8</span><span class="pc" style="left:1269px;top:108px;width:24px;">9</span><span class="pc" style="left:1293px;top:108px;width:24px;">+</span><svg style="left:1317px;top:108px" width="24" height="20" viewBox="0 0 24 20"><rect x="10" y="8" width="4" height="5"/><path d="M8 4.500q-2.500 5.500 0 11M16 4.500q2.500 5.500 0 11" fill="none" stroke="#000" stroke-width="1"/></svg><svg style="left:1341px;top:108px" width="24" height="20" viewBox="0 0 24 20"><rect x="10.500" y="8" width="4" height="5"/><path d="M8.500 4.500v11M16.500 4.500v11" fill="none" stroke="#000" stroke-width="1"/></svg><span class="pc" style="left:1221px;top:128px;width:24px;">4</span><span class="pc" style="left:1245px;top:128px;width:24px;">5</span><span class="pc" style="left:1269px;top:128px;width:24px;">6</span><span class="pc" style="left:1293px;top:128px;width:24px;">−</span><svg style="left:1317px;top:128px" width="24" height="20" viewBox="0 0 24 20"><rect x="13" y="8" width="3.500" height="6"/><path d="M6 10.500l1.500-1 2 5.500 2-10h5.500v2" fill="none" stroke="#000" stroke-width="1"/></svg><svg style="left:1341px;top:128px" width="24" height="20" viewBox="0 0 24 20"><rect x="14.500" y="8" width="3.500" height="6"/><rect x="6" y="4" width="3" height="4"/><path d="M7.500 10.500l1.500-1 2 5.500 2-10h5.500v2" fill="none" stroke="#000" stroke-width="1"/></svg><span class="pc" style="left:1221px;top:148px;width:24px;">1</span><span class="pc" style="left:1245px;top:148px;width:24px;">2</span><span class="pc" style="left:1269px;top:148px;width:24px;">3</span><span class="pc" style="left:1293px;top:148px;width:24px;">×</span><span class="pc" style="left:1317px;top:148px;width:24px;">,</span><svg style="left:1341px;top:148px" width="24" height="20" viewBox="0 0 24 20"><path d="M6 9.500h10.500M13 6l3.500 3.500-3.500 3.500" fill="none" stroke="#000" stroke-width="1.100"/></svg><span class="pc" style="left:1221px;top:168px;width:24px;">.</span><span class="pc" style="left:1245px;top:168px;width:24px;">0</span><span class="pc" style="left:1269px;top:168px;width:24px;">!</span><span class="pc" style="left:1293px;top:168px;width:24px;">/</span><span class="pc" style="left:1317px;top:168px;width:24px;letter-spacing:-1px;text-indent:-3px;">:=</span><span class="pc" style="left:1341px;top:168px;width:24px;">=</span><div style="left:1255.9px;top:176.8px;width:2.2px;height:2.4px;background:#f0f0f0"></div><div style="left:1221px;top:188px;width:145px;height:57px;border:1px solid #000;background:#f0f0f0"></div><div class="phd" style="top:189px"></div><span class="pt" style="top:189px">Matrici</span><svg style="left:1354px;top:192px" width="9" height="9" viewBox="0 0 9 9"><rect x="0.500" y="0.500" width="8" height="8" fill="#fff" stroke="#000"/><path d="M2 4.500h5" stroke="#000"/></svg><svg style="left:1221px;top:204px" width="24" height="20" viewBox="0 0 24 20"><path d="M7 3.500h-2.500v13h2.500M15 3.500h2.500v13h-2.500" fill="none" stroke="#000" stroke-width="1"/><rect x="7" y="5" width="3" height="4"/><rect x="12" y="5" width="3" height="4"/><rect x="7" y="11" width="3" height="4"/><rect x="12" y="11" width="3" height="4"/></svg><svg style="left:1245px;top:204px" width="24" height="20" viewBox="0 0 24 20"><rect x="10" y="8" width="4" height="5"/><path d="M7.500 4.500v12M16.500 4.500v12" fill="none" stroke="#000" stroke-width="1"/></svg><svg style="left:1269px;top:204px" width="24" height="20" viewBox="0 0 24 20"><rect x="8" y="10" width="4" height="6"/><path d="M13 5.500h5M15.500 5.500v5" fill="none" stroke="#000" stroke-width="1"/></svg><svg style="left:1293px;top:204px" width="24" height="20" viewBox="0 0 24 20"><path d="M6 13.500l2.500-8 2.500 8M7 11h3" fill="none" stroke="#000" stroke-width="1"/><rect x="12" y="13" width="2" height="3"/><rect x="15.500" y="9" width="3" height="5"/></svg><svg style="left:1317px;top:204px" width="24" height="20" viewBox="0 0 24 20"><path d="M6.500 13.500v-8l2.200 5 2.200-5v8" fill="none" stroke="#000" stroke-width="1"/><rect x="12" y="13" width="2" height="3"/><rect x="15.500" y="9" width="3" height="5"/></svg><svg style="left:1341px;top:204px" width="24" height="20" viewBox="0 0 24 20"><path d="M5 5.500h5M8.500 4l1.500 1.500-1.500 1.500M14 5.500h5M17.500 4l1.500 1.500-1.500 1.500" fill="none" stroke="#000" stroke-width="1"/><rect x="5.500" y="8.500" width="3" height="5"/><rect x="15.500" y="8.500" width="3" height="5"/><path d="M10 9l4 4M14 9l-4 4" stroke="#000" stroke-width="1"/></svg><svg style="left:1221px;top:224px" width="24" height="20" viewBox="0 0 24 20"><path d="M7 5.500h9M14 3.500l2 2-2 2" fill="none" stroke="#000" stroke-width="1.200"/><rect x="10" y="9" width="4" height="6"/></svg><svg style="left:1245px;top:224px" width="24" height="20" viewBox="0 0 24 20"><path d="M6 6.500h-1.500v8h1.500M18 6.500h1.500v8h-1.500" fill="none" stroke="#000" stroke-width="1"/><rect x="6.500" y="9" width="2" height="3"/><rect x="15.500" y="9" width="2" height="3"/><rect x="10.500" y="11" width="1" height="1"/><rect x="12.500" y="11" width="1" height="1"/></svg><svg style="left:1269px;top:224px" width="24" height="20" viewBox="0 0 24 20"><path d="M5.500 6.500h-1.500v8h1.500M18.500 6.500h1.500v8h-1.500" fill="none" stroke="#000" stroke-width="1"/><rect x="6" y="9" width="2" height="3"/><rect x="9" y="9" width="2" height="3"/><rect x="16" y="9" width="2" height="3"/><rect x="12" y="11" width="1" height="1"/><rect x="14" y="11" width="1" height="1"/></svg><svg style="left:1293px;top:224px" width="24" height="20" viewBox="0 0 24 20"><rect x="7" y="7" width="5" height="5"/><rect x="13" y="11" width="3" height="4"/></svg><svg style="left:1317px;top:224px" width="24" height="20" viewBox="0 0 24 20"><rect x="5" y="7" width="5" height="5"/><rect x="11" y="11" width="3" height="4"/><rect x="15" y="11" width="3" height="4"/></svg><div style="left:1221px;top:244px;width:145px;height:57px;border:1px solid #000;background:#f0f0f0"></div><div class="phd" style="top:245px"></div><span class="pt" style="top:245px">Booleani</span><svg style="left:1354px;top:248px" width="9" height="9" viewBox="0 0 9 9"><rect x="0.500" y="0.500" width="8" height="8" fill="#fff" stroke="#000"/><path d="M2 4.500h5" stroke="#000"/></svg><span class="pc" style="left:1221px;top:260px;width:24px;font-family:'Liberation Sans',sans-serif;font-weight:bold;font-size:16px;">=</span><span class="pc" style="left:1245px;top:260px;width:24px;font-family:'Liberation Sans',sans-serif;font-weight:bold;font-size:16px;">&lt;</span><span class="pc" style="left:1269px;top:260px;width:24px;font-family:'Liberation Sans',sans-serif;font-weight:bold;font-size:16px;">&gt;</span><span class="pc" style="left:1293px;top:260px;width:24px;font-family:'Liberation Sans',sans-serif;font-weight:bold;font-size:16px;">≤</span><span class="pc" style="left:1317px;top:260px;width:24px;font-family:'Liberation Sans',sans-serif;font-weight:bold;font-size:16px;">≥</span><span class="pc" style="left:1341px;top:260px;width:24px;font-family:'Liberation Sans',sans-serif;font-weight:bold;font-size:16px;">≠</span><svg style="left:1221px;top:280px" width="24" height="20" viewBox="0 0 24 20"><path d="M6.700 8.300h8.600v5.200" fill="none" stroke="#000" stroke-width="1.500"/></svg><svg style="left:1245px;top:280px" width="24" height="20" viewBox="0 0 24 20"><path d="M8.700 14.500l3.300-8 3.300 8" fill="none" stroke="#000" stroke-width="1.600"/></svg><svg style="left:1269px;top:280px" width="24" height="20" viewBox="0 0 24 20"><path d="M8.700 6.500l3.300 8 3.300-8" fill="none" stroke="#000" stroke-width="1.600"/></svg><svg style="left:1293px;top:280px" width="24" height="20" viewBox="0 0 24 20"><circle cx="12" cy="10" r="5" fill="none" stroke="#000" stroke-width="1.200"/><path d="M12 5v10M7 10h10" stroke="#000" stroke-width="1.200"/></svg><div style="left:1221px;top:300px;width:145px;height:77px;border:1px solid #000;background:#f0f0f0"></div><div class="phd" style="top:301px"></div><span class="pt" style="top:301px">Funzioni</span><svg style="left:1354px;top:304px" width="9" height="9" viewBox="0 0 9 9"><rect x="0.500" y="0.500" width="8" height="8" fill="#fff" stroke="#000"/><path d="M2 4.500h5" stroke="#000"/></svg><span class="ps" style="left:1221px;top:316px;width:24px;">log</span><span class="ps" style="left:1245px;top:316px;width:24px;">sign</span><span class="ps" style="left:1269px;top:316px;width:24px;">sin</span><span class="ps" style="left:1293px;top:316px;width:24px;">cos</span><svg style="left:1317px;top:316px" width="24" height="20" viewBox="0 0 24 20"><path d="M15.500 7.500v-1h-6.500l3 3.500-3 3.500h6.500v-1" fill="none" stroke="#000" stroke-width="1"/><rect x="11" y="3" width="2.500" height="2"/><rect x="7" y="15.500" width="3" height="1.500"/><rect x="11" y="15.500" width="3" height="1.500"/><rect x="15" y="15.500" width="3" height="1.500"/></svg><svg style="left:1341px;top:316px" width="24" height="20" viewBox="0 0 24 20"><path d="M7.500 6.500h9M9.500 6.500v7M14.500 6.500v7M8.500 13.500h2M13.500 13.500h2" fill="none" stroke="#000" stroke-width="1"/><rect x="11" y="3" width="2.500" height="2"/><rect x="6.500" y="15.500" width="3" height="1.500"/><rect x="10.500" y="15.500" width="3" height="1.500"/><rect x="14.500" y="15.500" width="3" height="1.500"/></svg><span class="ps" style="left:1221px;top:336px;width:24px;">ln</span><span class="ps" style="left:1245px;top:336px;width:24px;">arg</span><span class="ps" style="left:1269px;top:336px;width:24px;">tan</span><span class="ps" style="left:1293px;top:336px;width:24px;">cot</span><svg style="left:1317px;top:336px" width="24" height="20" viewBox="0 0 24 20"><path d="M7 10.500h10" stroke="#000" stroke-width="1"/><text x="12" y="8.500" font-family="Liberation Sans" font-weight="bold" font-size="8" text-anchor="middle">d</text><text x="9.500" y="17.500" font-family="Liberation Sans" font-weight="bold" font-size="8" text-anchor="middle">d</text><rect x="12.500" y="13" width="3" height="4"/><rect x="17" y="8" width="2" height="3"/></svg><svg style="left:1341px;top:336px" width="24" height="20" viewBox="0 0 24 20"><path d="M13 4.500q-2-1-2 2v8q0 3-2 2" fill="none" stroke="#000" stroke-width="1" stroke-dasharray="1.500 1"/><rect x="12" y="2" width="2" height="2"/><rect x="9" y="17" width="2" height="2"/><rect x="14" y="9" width="2" height="3"/><rect x="17.500" y="10" width="1.500" height="2"/></svg><span class="ps" style="left:1221px;top:356px;width:24px;">exp</span><svg style="left:1245px;top:356px" width="24" height="20" viewBox="0 0 24 20"><path d="M12 4q-2.500 0-2.500 2v2.500q0 1.500-2 1.500 2 0 2 1.500v2.500q0 2 2.500 2" fill="none" stroke="#000" stroke-width="1.500"/><rect x="13.500" y="6" width="2" height="3"/><rect x="13.500" y="11" width="2" height="3"/></svg><div style="left:1221px;top:376px;width:145px;height:37px;border:1px solid #000;background:#f0f0f0"></div><div class="phd" style="top:377px"></div><span class="pt" style="top:377px">Grafico</span><svg style="left:1354px;top:380px" width="9" height="9" viewBox="0 0 9 9"><rect x="0.500" y="0.500" width="8" height="8" fill="#fff" stroke="#000"/><path d="M2 4.500h5" stroke="#000"/></svg><svg style="left:1221px;top:392px" width="24" height="20" viewBox="0 0 24 20"><path d="M8 14.200A5.500 5.500 0 1 0 6.500 10" fill="none" stroke="#111" stroke-width="1.200"/><path d="M5 12l2.200 4 2.800-3.300z" fill="#111"/></svg><svg style="left:1245px;top:392px" width="24" height="20" viewBox="0 0 24 20"><path d="M12 5v10.500" stroke="#000" stroke-width="2"/><path d="M10 15.500h4" stroke="#000" stroke-width="1.200"/><path d="M7.300 9.300l4.700-5.800 4.700 5.800z" fill="#000"/></svg><svg style="left:1269px;top:392px" width="24" height="20" viewBox="0 0 24 20"><path d="M12 4v12M6 10h12" stroke="#000" stroke-width="1.100"/><path d="M10 6l2-2.300 2 2.300M10 14l2 2.300 2-2.300M8 8l-2.300 2 2.300 2M16 8l2.300 2-2.300 2" fill="none" stroke="#000" stroke-width="1.100"/></svg><svg style="left:1293px;top:392px" width="24" height="20" viewBox="0 0 24 20"><path d="M7 6.500h11M7 8.500h11M7 10.500h11M7 12.500h11" stroke="#5c5c5c" stroke-width="1" stroke-dasharray="1 1"/></svg><svg style="left:1317px;top:392px" width="24" height="20" viewBox="0 0 24 20"><path d="M7 6.500h10M7 10.500h10M7 14.500h10" stroke="#444" stroke-width="1.200"/></svg><svg style="left:1341px;top:392px" width="24" height="20" viewBox="0 0 24 20"><path d="M6 9.500a6 5 0 0 1 11-2.500M18 10.500a6 5 0 0 1-11 2.500" fill="none" stroke="#333" stroke-width="1.200"/><path d="M15 5l3.500 2.500-4 1.500zM9 15l-3.500-2.500 4-1.500z" fill="#333"/></svg><div style="left:1221px;top:412px;width:145px;height:57px;border:1px solid #000;background:#f0f0f0"></div><div class="phd" style="top:413px"></div><span class="pt" style="top:413px">Programmazione</span><svg style="left:1354px;top:416px" width="9" height="9" viewBox="0 0 9 9"><rect x="0.500" y="0.500" width="8" height="8" fill="#fff" stroke="#000"/><path d="M2 4.500h5" stroke="#000"/></svg><span class="ps" style="left:1221px;top:428px;width:24px;">if</span><span class="ps" style="left:1245px;top:428px;width:24px;">for</span><span class="ps" style="left:1269px;top:428px;width:48px;">try</span><span class="ps" style="left:1317px;top:428px;width:48px;">line</span><span class="ps" style="left:1221px;top:448px;width:48px;">while</span><span class="ps" style="left:1269px;top:448px;width:48px;">continue</span><span class="ps" style="left:1317px;top:448px;width:48px;">break</span><div style="left:1221px;top:468px;width:145px;height:117px;border:1px solid #000;background:#f0f0f0"></div><div class="phd" style="top:469px"></div><span class="pt" style="top:469px">Caratteri (α-ω)</span><svg style="left:1354px;top:472px" width="9" height="9" viewBox="0 0 9 9"><rect x="0.500" y="0.500" width="8" height="8" fill="#fff" stroke="#000"/><path d="M2 4.500h5" stroke="#000"/></svg><span class="pc" style="left:1221px;top:484px;width:24px;">α</span><span class="pc" style="left:1245px;top:484px;width:24px;">β</span><span class="pc" style="left:1269px;top:484px;width:24px;">γ</span><span class="pc" style="left:1293px;top:484px;width:24px;">δ</span><span class="pc" style="left:1317px;top:484px;width:24px;">ε</span><span class="pc" style="left:1341px;top:484px;width:24px;">ζ</span><span class="pc" style="left:1221px;top:504px;width:24px;">η</span><span class="pc" style="left:1245px;top:504px;width:24px;">ϑ</span><span class="pc" style="left:1269px;top:504px;width:24px;">θ</span><span class="pc" style="left:1293px;top:504px;width:24px;">ι</span><span class="pc" style="left:1317px;top:504px;width:24px;">κ</span><span class="pc" style="left:1341px;top:504px;width:24px;">λ</span><span class="pc" style="left:1221px;top:524px;width:24px;">μ</span><span class="pc" style="left:1245px;top:524px;width:24px;">ν</span><span class="pc" style="left:1269px;top:524px;width:24px;">ξ</span><span class="pc" style="left:1293px;top:524px;width:24px;">ο</span><span class="pc" style="left:1317px;top:524px;width:24px;">π</span><span class="pc" style="left:1341px;top:524px;width:24px;">ρ</span><span class="pc" style="left:1221px;top:544px;width:24px;">σ</span><span class="pc" style="left:1245px;top:544px;width:24px;">τ</span><span class="pc" style="left:1269px;top:544px;width:24px;">υ</span><span class="pc" style="left:1293px;top:544px;width:24px;">φ</span><span class="pc" style="left:1317px;top:544px;width:24px;">ϕ</span><span class="pc" style="left:1341px;top:544px;width:24px;">χ</span><span class="pc" style="left:1221px;top:564px;width:24px;">ψ</span><span class="pc" style="left:1245px;top:564px;width:24px;">ω</span><div style="left:1221px;top:584px;width:145px;height:97px;border:1px solid #000;background:#f0f0f0"></div><div class="phd" style="top:585px"></div><span class="pt" style="top:585px">Caratteri (Α-Ω)</span><svg style="left:1354px;top:588px" width="9" height="9" viewBox="0 0 9 9"><rect x="0.500" y="0.500" width="8" height="8" fill="#fff" stroke="#000"/><path d="M2 4.500h5" stroke="#000"/></svg><span class="pc" style="left:1221px;top:600px;width:24px;">Α</span><span class="pc" style="left:1245px;top:600px;width:24px;">Β</span><span class="pc" style="left:1269px;top:600px;width:24px;">Γ</span><span class="pc" style="left:1293px;top:600px;width:24px;">Δ</span><span class="pc" style="left:1317px;top:600px;width:24px;">Ε</span><span class="pc" style="left:1341px;top:600px;width:24px;">Ζ</span><span class="pc" style="left:1221px;top:620px;width:24px;">Η</span><span class="pc" style="left:1245px;top:620px;width:24px;">Θ</span><span class="pc" style="left:1269px;top:620px;width:24px;">Ι</span><span class="pc" style="left:1293px;top:620px;width:24px;">Κ</span><span class="pc" style="left:1317px;top:620px;width:24px;">Λ</span><span class="pc" style="left:1341px;top:620px;width:24px;">Μ</span><span class="pc" style="left:1221px;top:640px;width:24px;">Ν</span><span class="pc" style="left:1245px;top:640px;width:24px;">Ξ</span><span class="pc" style="left:1269px;top:640px;width:24px;">Ο</span><span class="pc" style="left:1293px;top:640px;width:24px;">Π</span><span class="pc" style="left:1317px;top:640px;width:24px;">Ρ</span><span class="pc" style="left:1341px;top:640px;width:24px;">Σ</span><span class="pc" style="left:1221px;top:660px;width:24px;">Τ</span><span class="pc" style="left:1245px;top:660px;width:24px;">Υ</span><span class="pc" style="left:1269px;top:660px;width:24px;">Φ</span><span class="pc" style="left:1293px;top:660px;width:24px;">Χ</span><span class="pc" style="left:1317px;top:660px;width:24px;">Ψ</span><span class="pc" style="left:1341px;top:660px;width:24px;">Ω</span>
<div id="status"><div style="left:0;top:0;width:1366px;height:1px;background:#d7d7d7"></div><span class="t" style="left:4px;top:5px;font-size:12px;line-height:15px;letter-spacing:-0.25px">Pagina 3 di 4</span><span class="t" style="left:90px;top:5px;font-size:12px;line-height:15px">Pronto</span><svg style="left:1263px;top:4px" width="14" height="17" viewBox="0 0 14 17"><path d="M0.500 0v5.500h11V0" fill="#fff" stroke="#555" stroke-width="1"/><path d="M3 1.500h6" stroke="#555"/><path d="M0.500 18v-7.500h8l3 3V18" fill="#fff" stroke="#555"/><path d="M8.500 10.500v3h3" fill="none" stroke="#555"/><path d="M3 15.500h6" stroke="#555"/></svg><svg style="left:1279px;top:11px" width="6" height="4" viewBox="0 0 6 4"><path d="M0 0h6L3 3.500z" fill="#000"/></svg><svg style="left:1289px;top:3px" width="18" height="17" viewBox="0 0 18 17"><defs><radialGradient id="gm" cx="40%" cy="35%" r="70%"><stop offset="0" stop-color="#f2fbff"/><stop offset="1" stop-color="#8fd0f4"/></radialGradient></defs><path d="M9.500 9.500l6 6" stroke="#d08a30" stroke-width="2.600" stroke-linecap="round"/><circle cx="6.500" cy="6.500" r="5.300" fill="url(#gm)" stroke="#58a8e0" stroke-width="1.200"/></svg><span class="t" style="left:1310px;top:5px;font-size:12px;line-height:15px;letter-spacing:-0.5px">100%</span><svg style="left:1343px;top:11px" width="6" height="4" viewBox="0 0 6 4"><path d="M0 0h6L3 3.500z" fill="#000"/></svg></div>
<div style="left:0;top:766px;width:1366px;height:2px;background:#333"></div><div style="left:1362px;top:766px;width:1px;height:2px;background:#6a6a6a"></div><div style="left:260px;top:766px;width:36px;height:2px;background:#6c6c6c"></div><div style="left:0;top:765px;width:1366px;height:1px;background:#fbfbfb"></div>
</body></html>
